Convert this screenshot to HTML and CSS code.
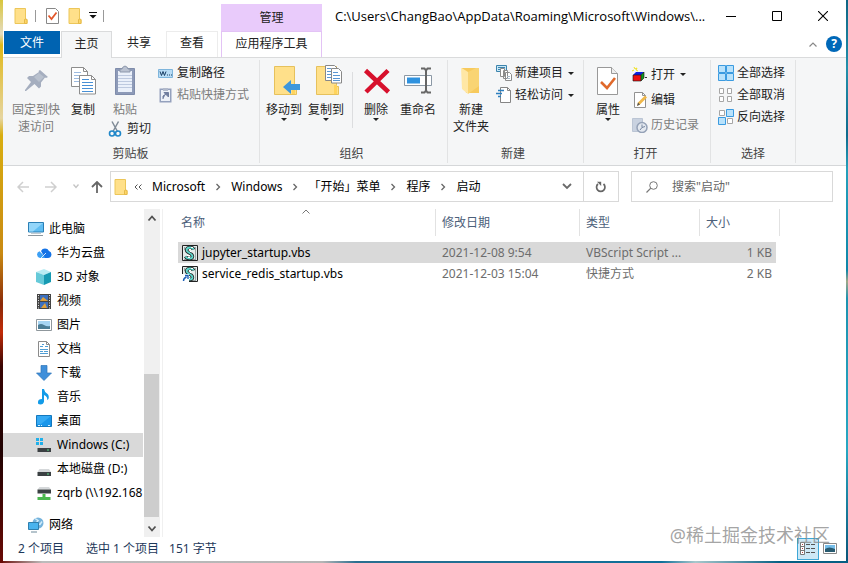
FILE: index.html
```html
<!DOCTYPE html>
<html lang="zh-CN">
<head>
<meta charset="utf-8">
<meta name="viewport" content="width=device-width, initial-scale=1">
<title>启动</title>
<link rel="stylesheet" href="styles.css">
</head>
<body>
<svg class="defs" aria-hidden="true">
  <symbol id="folder" viewBox="0 0 16 16"><path d="M2 .5h10.500v11h1.500v4H2z" fill="#ffe08a" stroke="#ecc659"/><path d="M11.500 15.500v-4q1.500-1 2.500 0v4z" fill="#ffd766" stroke="#e5b94a"/></symbol>
  <symbol id="crumb" viewBox="0 0 6 8"><path d="M1.500 1 4.500 4 1.500 7" fill="none" stroke="#666" stroke-width="1.300"/></symbol>
  <symbol id="disk" viewBox="0 0 16 16"><path d="M3.500 8h9.500l2 3H1.500z" fill="#d5d8da"/><path d="M1.500 11h13.500v4H1.500z" fill="#3b4043"/><path d="M11 12.500h2v1h-2z" fill="#5be08a"/></symbol>
  <symbol id="script" viewBox="0 0 16 16"><path d="M.5.500h15v15H.5z" fill="#e4eceb" stroke="#222"/><path d="M13.500 2v12M2.500 2v3M2 14.500h12" stroke="#9aa5a4"/><path d="M11.500 4.500q-.5-2-3.500-2T4.500 5q0 1.500 3 3t3 3.500q0 2-3 2t-4-2" fill="none" stroke="#222" stroke-width="3.400"/><path d="M11.500 4.500q-.5-2-3.500-2T4.500 5q0 1.500 3 3t3 3.500q0 2-3 2t-4-2" fill="none" stroke="#5fd8cd" stroke-width="1.800"/><path d="M7 4.500h2M7.500 6l2 1M5 10.500h3M6 12.500h2M9 2.500h2" stroke="#fff"/></symbol>
</svg>

<main class="window">
  <header class="top">
    <div class="top-left">
      <div class="quick">
        <button class="q" aria-label="文件夹"><svg width="16" height="16"><use href="#folder"/></svg></button>
        <i class="bar"></i>
        <button class="q check" aria-label="属性"><svg width="13" height="16" viewBox="0 0 13 16"><path d="M.5.500h9l3 3v12H.5z" fill="#fff" stroke="#888"/><path d="m2.500 7.500 3 3.500 5-6.500" fill="none" stroke="#e2572b" stroke-width="1.800"/></svg></button>
        <button class="q" aria-label="新建文件夹"><svg width="16" height="16"><use href="#folder"/></svg></button>
        <button class="q" aria-label="自定义快速访问工具栏"><svg width="8" height="7" viewBox="0 0 8 7"><path d="M0 0h8v1H0zM.5 3h7L4 6.500z" fill="#111"/></svg></button>
        <i class="bar"></i>
      </div>
      <nav class="tabs">
        <button class="file">文件</button>
        <button class="tab active">主页</button>
        <button class="tab share">共享</button>
        <button class="tab view">查看</button>
      </nav>
    </div>
    <div class="context">
      <span class="context-name">管理</span>
      <button class="context-tab">应用程序工具</button>
    </div>
    <div class="top-right">
      <div class="caption">
        <h1 class="path">C:\Users\ChangBao\AppData\Roaming\Microsoft\Windows\...</h1>
        <button class="ctl" aria-label="最小化"><svg width="10" height="10" viewBox="0 0 10 10"><path d="M0 5.500h10" stroke="#000"/></svg></button>
        <button class="ctl" aria-label="最大化"><svg width="10" height="10" viewBox="0 0 10 10"><path d="M.5.500h9v9h-9z" fill="none" stroke="#000"/></svg></button>
        <button class="ctl" aria-label="关闭"><svg width="10" height="10" viewBox="0 0 10 10"><path d="m0 0 10 10M10 0 0 10" stroke="#000" stroke-width="1.100"/></svg></button>
      </div>
      <div class="helpers">
        <button class="q" aria-label="折叠功能区"><svg width="8" height="5" viewBox="0 0 8 5"><path d="m.5 4.500 3.500-3.500 3.500 3.500" fill="none" stroke="#888" stroke-width="1.200"/></svg></button>
        <button class="help" aria-label="帮助">?</button>
      </div>
    </div>
  </header>

  <section class="ribbon">
    <div class="group clip">
      <div class="tools">
        <button class="big pin off"><svg width="32" height="32" viewBox="0 0 32 32"><path d="m20 5 8 7-2 1-1-.5-4 5 0 4-2 2-4.500-4.500L6 26l-1 0 0-1 6-8-4-4 2-2 4 0 6-4-.5-1z" fill="#a5aebf"/><path d="m14 12 5-4 5 4-5 5z" fill="#b9c1ce"/></svg><span>固定到快<br>速访问</span></button>
        <button class="big copy"><svg width="32" height="32" viewBox="0 0 32 32"><path d="M4.500 2.500h12l4 4v15h-16z" fill="#fff" stroke="#8d8d8d"/><path d="M16.500 2.500v4h4" fill="none" stroke="#8d8d8d"/><path d="M7 7.500h7M7 10.500h11M7 13.500h6M7 16.500h5" stroke="#9dbbe0"/><path d="M12.500 10.500h12l4 4v14.500h-16z" fill="#fff" stroke="#8d8d8d"/><path d="M24.500 10.500v4h4" fill="none" stroke="#8d8d8d"/><path d="M15 14.500h7M15 17.500h11M15 20.500h11M15 23.500h11M15 26.500h11" stroke="#478fd5"/></svg><span>复制</span></button>
        <div class="paste-col">
          <button class="big paste off"><svg width="32" height="32" viewBox="0 0 32 32"><path d="M6.500 3.500h19v26h-19z" fill="#8d9ab8" stroke="#7f8cab"/><path d="M9 6h14v21H9z" fill="#eaf0fa"/><path d="M11 4h2q0-2 3-3 3 1 3 3h2v3H11z" fill="#bac2d1" stroke="#8c97ab"/><path d="M9 10.500h14M9 13.500h14M9 16.500h14M9 19.500h14M9 22.500h14" stroke="#bdc9df"/></svg><span>粘贴</span></button>
          <button class="row cut"><svg width="16" height="16" viewBox="0 0 16 16"><path d="m4 .500 5.500 10M10.500.500 5 10.500" stroke="#7e8a96" stroke-width="1.500"/><circle cx="4" cy="12.500" r="2.500" fill="none" stroke="#2087c9" stroke-width="1.600"/><circle cx="10" cy="12.500" r="2.500" fill="none" stroke="#2087c9" stroke-width="1.600"/></svg><span>剪切</span></button>
        </div>
        <div class="list">
          <button class="row"><svg width="16" height="16" viewBox="0 0 16 16"><path d="M.5 4.500h14v8H.5z" fill="#b8dcf5" stroke="#7eb5dc"/><path d="m2 6.500 1.500 4 1.500-4 1.500 4L8 6.500M9 10h1m1 0h1m1 0h1" fill="none" stroke="#183d63"/></svg><span>复制路径</span></button>
          <button class="row off"><svg width="16" height="16" viewBox="0 0 16 16"><path d="M1.500 1.500h12v14h-12z" fill="#94a1bd"/><path d="M3 3h9v11H3z" fill="#edf1f8"/><path d="M5 1h5v3H5z" fill="#b2bacb"/><path d="M5 12V9l3-2M6 5.500h4.500V10z" fill="#6f7d9e" stroke="#6f7d9e"/></svg><span>粘贴快捷方式</span></button>
        </div>
      </div>
      <h2>剪贴板</h2>
    </div>

    <div class="group organize">
      <div class="tools">
        <button class="big"><svg width="32" height="32" viewBox="0 0 32 32"><path d="M6.500 1.500h20v20h2v8h-22z" fill="#ffe08a" stroke="#e6c15c"/><path d="M24 29V20h3v9" fill="#ffd45c"/><path d="m15 22 8-7v4h9v6h-9v4z" fill="#3d97dc"/></svg><span>移动到</span><i class="caret"></i></button>
        <button class="big"><svg width="32" height="32" viewBox="0 0 32 32"><path d="M6.500 1.500h20v20h2v8h-22z" fill="#ffe08a" stroke="#e6c15c"/><path d="M24 29V20h3v9" fill="#ffd45c"/><path d="M15.500.500h9l4 4v11h-13z" fill="#fff" stroke="#888"/><path d="M21.500 3.500h7l3 3v11.500h-10z" fill="#fff" stroke="#888"/><path d="M17 3.500h4M17 6.500h4M17 9.500h4M17 12.500h4M23 7.500h5M23 10.500h7M23 13.500h7M23 15.500h7" stroke="#5b97d3"/></svg><span>复制到</span><i class="caret"></i></button>
        <i class="rule"></i>
        <button class="big del"><svg width="32" height="32" viewBox="0 0 32 32"><path d="m5.500 5.500 23 21.500M28 5.500 6 27" stroke="#d7102c" stroke-width="4.500"/></svg><span>删除</span><i class="caret"></i></button>
        <button class="big rename"><svg width="32" height="32" viewBox="0 0 32 32"><path d="M2.500 10.500h27v10h-27z" fill="#fff" stroke="#8b98a5"/><path d="M5 12.500h13v6H5z" fill="#2f92df"/><path d="M19 3.500h3.500l1.500 2 1.500-2H29M24 5v21m-5 1.500h3.500l1.500-2 1.500 2H29" fill="none" stroke="#666" stroke-width="2"/></svg><span>重命名</span></button>
      </div>
      <h2>组织</h2>
    </div>

    <div class="group create">
      <div class="tools">
        <button class="big"><svg width="32" height="32" viewBox="0 0 32 32"><path d="M7 3h17v25H11z" fill="#f7ca5d"/><path d="M6 3q1 0 7 4v22l-6-5z" fill="#ffe7a5"/><path d="M13 7q6-3 8-4h3v18l-11 8z" fill="#f9d473"/></svg><span>新建<br>文件夹</span></button>
        <div class="list">
          <button class="row"><svg width="16" height="16" viewBox="0 0 16 16"><path d="M.5.500h10v6H.5z" fill="#c9e8f7" stroke="#3c84ad"/><path d="M2 2.500h7M2 4.500h4" stroke="#3c84ad"/><path d="M4.500 3.500h4v8h-4zM7.500 5.500h4v8h-4zM9.500 7.500h4l2 2v6h-6z" fill="#fff" stroke="#8c8c8c"/><path d="M11 11.500h3M11 13.500h3" stroke="#a9b9c9"/></svg><span>新建项目</span><i class="caret"></i></button>
          <button class="row"><svg width="16" height="16" viewBox="0 0 16 16"><path d="M4.500.500h7l3 3v12h-10z" fill="#fff" stroke="#858585"/><path d="M11.500.500v3h3" fill="none" stroke="#858585"/><path d="M2 3.500h6M0 6.500h6M2 9.500h3" stroke="#2d7fbf" stroke-width="1.500"/></svg><span>轻松访问</span><i class="caret"></i></button>
        </div>
      </div>
      <h2>新建</h2>
    </div>

    <div class="group open">
      <div class="tools">
        <button class="big props"><svg width="32" height="32" viewBox="0 0 32 32"><path d="M5.500 2.500h14l6 6v21h-20z" fill="#fff" stroke="#999"/><path d="M19.500 2.500v6h6" fill="#eee" stroke="#999"/><path d="m9 17 6 6 8-10" fill="none" stroke="#e0692b" stroke-width="2.600"/></svg><span>属性</span><i class="caret"></i></button>
        <div class="list loose">
          <button class="row"><svg width="16" height="16" viewBox="0 0 16 16"><path d="M1 8h8v6H1z" fill="#ee1010"/><path d="m1 8 3-3h8L9 8z" fill="#1020e0"/><path d="m9 8 3-3v6l-3 3z" fill="#14981e"/><path d="M1 8h8v6H1zM9 8l3-3v6l-3 3" fill="none" stroke="#111" stroke-width=".6"/><path d="m2 0 1 2 2-1-1 2 2 1M0 4l2-1" fill="none" stroke="#efe11e"/><path d="M13 10h2v1h-2z" fill="#333"/></svg><span>打开</span><i class="caret"></i></button>
          <button class="row"><svg width="16" height="16" viewBox="0 0 16 16"><path d="M2.500.500h8l3 3v12h-11z" fill="#fff" stroke="#929292"/><path d="M10.500.500v3h3" fill="none" stroke="#929292"/><path d="m5 14 1-3.500 7-7 2 2-7 7z" fill="#f0b84b"/><path d="m5 14 1-3.500 2 2z" fill="#555"/></svg><span>编辑</span></button>
          <button class="row off"><svg width="16" height="16" viewBox="0 0 16 16"><path d="M.5 1.500h10v13H.5z" fill="#c9d2e0" stroke="#bbc5d4"/><circle cx="10" cy="10.500" r="5" fill="#e4e9f0" stroke="#95a2b7" stroke-width="1.500"/><path d="M10 7.500v3l3-1M8 13l2-2.500" fill="none" stroke="#7787a0"/></svg><span>历史记录</span></button>
        </div>
      </div>
      <h2>打开</h2>
    </div>

    <div class="group select">
      <div class="tools">
        <div class="list">
          <button class="row"><svg width="16" height="16" viewBox="0 0 16 16"><path d="M.5.500h7v7h-7zM8.500.500h7v7h-7zM.5 8.500h7v7h-7zM8.500 8.500h7v7h-7z" fill="#b9e2fb" stroke="#3b9be0"/></svg><span>全部选择</span></button>
          <button class="row"><svg width="16" height="16" viewBox="0 0 16 16"><path d="M1.500 1.500h4v5h-4zM9.500 1.500h4v5h-4zM1.500 9.500h4v5h-4zM9.500 9.500h4v5h-4z" fill="#fff" stroke="#a6a6a6"/></svg><span>全部取消</span></button>
          <button class="row"><svg width="16" height="16" viewBox="0 0 16 16"><path d="M1.500 1.500h5v5h-5zM9.500 9.500h5v5h-5z" fill="#fff" stroke="#a6a6a6"/><path d="M8.500.500h7v7h-7zM.5 8.500h7v7h-7z" fill="#b9e2fb" stroke="#3b9be0"/></svg><span>反向选择</span></button>
        </div>
      </div>
      <h2>选择</h2>
    </div>
  </section>

  <section class="nav">
    <div class="arrows">
      <button class="q" aria-label="后退"><svg width="12" height="12" viewBox="0 0 12 12"><path d="M12 6H1m5-5L1 6l5 5" fill="none" stroke="#cfcfcf" stroke-width="1.500"/></svg></button>
      <button class="q" aria-label="前进"><svg width="12" height="12" viewBox="0 0 12 12"><path d="M0 6h11M6 1l5 5-5 5" fill="none" stroke="#cfcfcf" stroke-width="1.500"/></svg></button>
      <button class="q recent" aria-label="最近位置"><svg width="6" height="5" viewBox="0 0 6 5"><path d="m.5.500 2.500 3 2.500-3" fill="none" stroke="#c4c4c4" stroke-width="1.300"/></svg></button>
      <button class="q" aria-label="上移"><svg width="12" height="12" viewBox="0 0 12 12"><path d="M6 12V1M1 6l5-5 5 5" fill="none" stroke="#666" stroke-width="1.800"/></svg></button>
    </div>
    <div class="address">
      <div class="crumbs">
        <svg class="crumb-icon" width="16" height="16"><use href="#folder"/></svg>
        <svg class="back" width="8" height="6" viewBox="0 0 8 6"><path d="M3.500.500 1 3l2.500 2.500m4-5L5 3l2.500 2.500" fill="none" stroke="#555"/></svg>
        <a href="#">Microsoft</a><svg width="6" height="8"><use href="#crumb"/></svg>
        <a href="#">Windows</a><svg width="6" height="8"><use href="#crumb"/></svg>
        <a href="#">「开始」菜单</a><svg width="6" height="8"><use href="#crumb"/></svg>
        <a href="#">程序</a><svg width="6" height="8"><use href="#crumb"/></svg>
        <a href="#">启动</a>
        <button class="q drop" aria-label="以前的位置"><svg width="10" height="7" viewBox="0 0 10 7"><path d="m1 1 4 4 4-4" fill="none" stroke="#6a6a6a" stroke-width="1.800"/></svg></button>
      </div>
      <button class="q refresh" aria-label="刷新"><svg width="12" height="12" viewBox="0 0 12 12"><path d="M3 3a4.200 4.200 0 1 0 5.500 0" fill="none" stroke="#666" stroke-width="1.700"/><path d="M2 .8h4.200V5z" fill="#666"/></svg></button>
    </div>
    <label class="search"><svg width="12" height="12" viewBox="0 0 12 12"><circle cx="7.500" cy="4.500" r="3.800" fill="none" stroke="#777"/><path d="M4.800 7.200.5 11.500" stroke="#777" stroke-width="1.200"/></svg><input type="search" aria-label="搜索" placeholder='搜索"启动"'></label>
  </section>

  <section class="content">
    <aside class="side">
      <ul class="tree">
        <li class="root"><svg width="16" height="16" viewBox="0 0 16 16"><path d="M.5 1.500h15v9.500H.5z" fill="#5fbdf2" stroke="#2b7fb5"/><path d="M1 2h14L5 10.500H1z" fill="#93d6fa"/><path d="M0 14.500h15" stroke="#8c979e"/><path d="M3 12.500h10" stroke="#c2cbd1"/></svg><span>此电脑</span></li>
        <li><svg width="16" height="16" viewBox="0 0 16 16"><path d="M4 13a3.500 3.500 0 0 1-.5-6.800L10 13z" fill="#3ca0f5"/><path d="M5 6a4.500 4.500 0 0 1 8 0 3.600 3.600 0 0 1-1 7H9z" fill="#1473e6"/><path d="m5 13 5-5" stroke="#fff" stroke-width=".8"/></svg><span>华为云盘</span></li>
        <li><svg width="16" height="16" viewBox="0 0 16 16"><path d="m8 0 7 3-7 3-8-3z" fill="#b9ecf3"/><path d="m0 3 8 3v10l-8-3z" fill="#66cad9"/><path d="m8 6 7-3v10l-7 3z" fill="#169ab2"/></svg><span>3D 对象</span></li>
        <li><svg width="16" height="16" viewBox="0 0 16 16"><path d="M1 1h14v15H1z" fill="#444"/><path d="M4 2h8v6H4zM4 9h8v6H4z" fill="#3c6fbd"/><path d="m4 8 3-4 5 4zM5 15l4-5 2 5z" fill="#e0a13b"/><path d="M2.500 2v14M13.500 2v14" stroke="#e6e6e6" stroke-dasharray="1 1.500"/></svg><span>视频</span></li>
        <li><svg width="16" height="16" viewBox="0 0 16 16"><path d="M.5 2.500h15v11H.5z" fill="#fff" stroke="#8f979c"/><path d="M2 4h12v8H2z" fill="#a7d5f3"/><path d="M2 8q3-2 6 0t6 1v3H2z" fill="#4b7d96"/></svg><span>图片</span></li>
        <li><svg width="16" height="16" viewBox="0 0 16 16"><path d="M2.500.500h8l3 3v12h-11z" fill="#fff" stroke="#8b8b8b"/><path d="M10.500.500v3h3" fill="none" stroke="#8b8b8b"/><path d="M4 5.500h3m2 0h3M4 8.500h8M4 10.500h3m1 0h4M4 12.500h8M6 3.500h2" stroke="#4f9ed5"/></svg><span>文档</span></li>
        <li><svg width="16" height="16" viewBox="0 0 16 16"><path d="M5 .500h6V8h4.500L8 15.500.500 8H5z" fill="#3f8fda" stroke="#2c74b8" stroke-width=".7"/></svg><span>下载</span></li>
        <li><svg width="16" height="16" viewBox="0 0 16 16"><path d="M6 0h2q.5 3 3 4.500T12.500 10L11 11q1-3-3-5v6.500q-.5 3-3.500 3T2 13q0-3 4-3z" fill="#129be8"/></svg><span>音乐</span></li>
        <li><svg width="16" height="16" viewBox="0 0 16 16"><path d="M.5 2.500h15v11H.5z" fill="#1996ea" stroke="#1478bd"/><path d="M1 3h14L5 11H1z" fill="#35aaf4"/><path d="M2 12.500h2m1 0h1m6 0h2" stroke="#d9f1ff"/></svg><span>桌面</span></li>
        <li class="current"><svg width="16" height="16" viewBox="0 0 16 16"><path d="M0 1h3v3H0zm4 0h3v3H4zM0 5h3v3H0zm4 0h3v3H4z" fill="#1fb0ea"/><use href="#disk"/></svg><span>Windows (C:)</span></li>
        <li><svg width="16" height="16"><use href="#disk"/></svg><span>本地磁盘 (D:)</span></li>
        <li><svg width="16" height="16" viewBox="0 0 16 16"><path d="M3.500 2h9.500l2 2.500H1.500z" fill="#d5d8da"/><path d="M1.500 4.500h13.500v4H1.500z" fill="#3b4043"/><path d="M6.500 9h3v3h5v3h-13v-3h5z" fill="#4cb84f"/></svg><span>zqrb (\\192.168</span></li>
        <li class="root network"><svg width="16" height="16" viewBox="0 0 16 16"><circle cx="10" cy="6" r="5.500" fill="#75b3dc"/><path d="m7 1.500 3 2-2 3 4 1 2-3" fill="none" stroke="#d2ecfa" stroke-width="1.500"/><path d="M.5 5.500h10v7H.5z" fill="#49b3ee" stroke="#2f7fae"/><path d="M3 15h6" stroke="#6d8999"/></svg><span>网络</span></li>
      </ul>
      <div class="scroll">
        <svg class="arrow" width="10" height="7" viewBox="0 0 10 7"><path d="m1.500 5.500 3.500-4 3.500 4" fill="none" stroke="#505050" stroke-width="1.800"/></svg>
        <div class="track"><div class="thumb"></div></div>
        <svg class="arrow" width="10" height="7" viewBox="0 0 10 7"><path d="m1.500 1.500 3.500 4 3.500-4" fill="none" stroke="#505050" stroke-width="1.800"/></svg>
      </div>
    </aside>
    <div class="files">
      <table>
        <colgroup><col class="c-name"><col class="c-date"><col class="c-type"><col class="c-size"></colgroup>
        <thead><tr><th class="sorted">名称<svg width="8" height="5" viewBox="0 0 8 5"><path d="m.5 4.500 3.500-3.500 3.500 3.500" fill="none" stroke="#777"/></svg></th><th>修改日期</th><th>类型</th><th>大小</th></tr></thead>
        <tbody>
          <tr class="picked"><td><div class="name"><svg width="16" height="16"><use href="#script"/></svg><span>jupyter_startup.vbs</span></div></td><td>2021-12-08 9:54</td><td>VBScript Script ...</td><td>1 KB</td></tr>
          <tr><td><div class="name"><svg width="16" height="16" viewBox="0 0 16 16"><use href="#script"/><path d="M0 8h7v8H0z" fill="#fff"/><path d="M1.500 15q0-3 3-4M3 9.500h3V13" fill="none" stroke="#1d5fb8" stroke-width="1.400"/></svg><span>service_redis_startup.vbs</span></div></td><td>2021-12-03 15:04</td><td>快捷方式</td><td>2 KB</td></tr>
        </tbody>
      </table>
    </div>
  </section>

  <footer class="status">
    <span class="count">2 个项目</span><span class="sel">选中 1 个项目</span><span>151 字节</span>
    <div class="views">
      <button class="details" aria-label="详细信息"><svg width="16" height="16" viewBox="0 0 16 16"><path d="M.5 1.500h4v12h-4zM.5 5.500h4m-4 4h4" fill="#fff" stroke="#777"/><path d="M2 3.500h1m-1 4h1m-1 4h1" stroke="#b04444"/><path d="M6 3.500h4m1 0h4M6 7.500h4m1 0h4M6 11.500h4m1 0h4" stroke="#555"/></svg></button>
      <button class="q" aria-label="大图标"><svg width="14" height="12" viewBox="0 0 14 12"><path d="M.5.500h13v10H.5z" fill="#fff" stroke="#888"/><path d="M2 2h10v7H2z" fill="#75bde9"/><path d="M2 6q4-3 10 0v3H2z" fill="#285a70"/></svg></button>
    </div>
  </footer>
  <p class="mark">@稀土掘金技术社区</p>
</main>
</body>
</html>
```
FILE: styles.css
```css
* {
  box-sizing: border-box;
}

body {
  display: flex;
  min-height: 100vh;
  margin: 0;
  padding: 0 2px 2px 3px;
  background:
    linear-gradient(#d9c63c, #e5dcc0 6%, #e0b818 8%, #e6d5a0 21%, #d9ae10 24%, #c98a12 45%, #8a2a08 54%, #c22b08 59%, #3a0503 65%, #200202 80%, #6a0a05) left / 3px 100% no-repeat,
    linear-gradient(90deg, #6a0a05, #bcbcbc 5%, #b5b5b5 38%, #2a6f90 42%, #0e6f99 78%, #a9c8cc 82%, #055f83 92%) bottom / 100% 2px no-repeat,
    linear-gradient(#0e6483, #2390ab 12%, #0f6a8c 24%, #25a0bb 30%, #0e86a8 48%, #9fa888 50%, #1d93b0 53%, #27a7c2 80%, #0a5377) right / 2px 100% no-repeat;
  font: 12px/16px "Noto Sans", "Noto Sans CJK SC", sans-serif;
  color: #222;
}

button {
  padding: 0;
  border: 0;
  background: none;
  font: inherit;
  color: inherit;
}

svg {
  flex: none;
  display: block;
}

.defs {
  position: absolute;
  width: 0;
  height: 0;
}

.window {
  position: relative;
  display: flex;
  flex: 1;
  flex-direction: column;
  min-width: 0;
  background: #fff;
}

/* Title bar and tabs */
.top {
  display: flex;
  height: 57px;
}

.top-left {
  width: 218px;
}

.quick {
  display: flex;
  align-items: center;
  height: 31px;
  padding-left: 10px;
  gap: 6px;
}

.q {
  display: grid;
  place-items: center;
}

.bar {
  width: 1px;
  height: 12px;
  margin: 0 4px 0 0;
  background: #999;
}

.check {
  margin-right: 2px;
}

.tabs {
  display: flex;
  height: 27px;
  padding-left: 1px;
}

.tabs button {
  position: relative;
  height: 27px;
  padding-bottom: 3px;
}

.tabs .file {
  width: 56px;
  height: 23px;
  margin-right: 1px;
  padding: 0;
  background: #0063b1;
  color: #fff;
}

.tabs .active {
  width: 51px;
  background: #f5f6f7;
  border: 1px solid #dadbdc;
  border-bottom: 0;
}

.share {
  width: 54px;
}

.tabs .view {
  width: 52px;
  height: 26px;
  border: 1px solid #ececec;
  border-bottom: 0;
}

.context {
  display: flex;
  flex-direction: column;
  width: 101px;
  padding-top: 4px;
  text-align: center;
}

.context-name {
  height: 27px;
  line-height: 27px;
  background: #e9cbfb;
}

.context-tab {
  flex: 1;
  padding-bottom: 2px;
  border: 1px solid #e3c3f5;
  border-bottom: 0;
  background: #fff;
  white-space: nowrap;
}

.top-right {
  flex: 1;
  min-width: 0;
}

.caption {
  display: flex;
  align-items: center;
  height: 31px;
}

.path {
  flex: 1;
  margin: 0;
  padding-left: 13px;
  overflow: hidden;
  font-family: "Open Sans", sans-serif;
  font-size: 13px;
  font-weight: 400;
  white-space: nowrap;
  color: #000;
}

.ctl {
  display: grid;
  place-items: center;
  width: 46px;
  height: 31px;
}

.helpers {
  display: flex;
  justify-content: flex-end;
  align-items: center;
  gap: 9px;
  height: 26px;
  padding-right: 4px;
}

.help {
  width: 16px;
  height: 16px;
  border-radius: 50%;
  background: #0068b8;
  color: #fff;
  font-weight: 700;
}

/* Ribbon */
.ribbon {
  display: flex;
  height: 109px;
  padding: 2px 0;
  border-top: 1px solid #dadbdc;
  border-bottom: 1px solid #d5d7d9;
  background: #f5f6f7;
}

.group {
  display: flex;
  flex-direction: column;
  flex: none;
  border-right: 1px solid #e2e3e4;
}

.clip { width: 257px; padding-left: 6px; }
.organize { width: 188px; padding-left: 3px; }
.create { width: 136px; padding-left: 2px; }
.open { width: 127px; padding-left: 4px; }
.select { width: 85px; padding-left: 7px; }

.tools {
  display: flex;
  flex: 1;
}

.group h2 {
  margin: 0;
  padding: 0 7px 1px 0;
  font-size: 12px;
  font-weight: 400;
  text-align: center;
  color: #444;
}

.big {
  display: flex;
  flex-direction: column;
  align-items: center;
  align-self: flex-start;
  width: 42px;
  padding-top: 5px;
  line-height: 17px;
  white-space: nowrap;
}

.big svg {
  margin-bottom: 4px;
}

.pin { width: 54px; }
.copy, .paste, .props { width: 40px; }
.del { width: 36px; }
.rename { width: 48px; }

.off {
  color: #7c7c7c;
}

.caret {
  border: 3px solid transparent;
  border-top-color: #222;
  border-bottom: 0;
}

.rule {
  width: 1px;
  height: 56px;
  margin: 12px 5px 0;
  background: #dcdddf;
}

.row {
  display: flex;
  align-items: center;
  gap: 3px;
  height: 22px;
  white-space: nowrap;
}

.row .caret {
  margin-left: 2px;
}

.paste-col {
  width: 55px;
  padding-left: 2px;
}

.cut {
  padding-left: 3px;
}

.list {
  padding-top: 2px;
}

.create .list,
.open .list {
  padding-left: 4px;
}

.loose .row {
  height: 25px;
}

/* Address bar */
.nav {
  display: flex;
  height: 43px;
  padding: 5px 13px 7px 0;
}

.arrows {
  display: flex;
  align-items: center;
  width: 107px;
  padding-left: 14px;
  gap: 16px;
}

.recent {
  margin-right: -4px;
}

.address {
  display: flex;
  flex: 1;
  min-width: 0;
  border: 1px solid #d9d9d9;
}

.crumbs {
  display: flex;
  flex: 1;
  align-items: center;
  gap: 10px;
  padding-left: 2px;
  white-space: nowrap;
}

.crumb-icon {
  margin-right: -5px;
}

.crumbs a {
  color: #000;
  text-decoration: none;
}

.drop {
  margin: 0 11px 0 auto;
}

.refresh {
  width: 35px;
  border-left: 1px solid #d9d9d9;
}

.search {
  display: flex;
  flex: none;
  align-items: center;
  gap: 14px;
  width: 202px;
  margin-left: 12px;
  padding-left: 14px;
  border: 1px solid #d9d9d9;
}

.search input {
  flex: 1;
  min-width: 0;
  padding: 0;
  border: 0;
  outline: 0;
  background: none;
  font: inherit;
}

.search input::placeholder {
  color: #666;
}

/* Folder tree and file list */
.content {
  display: flex;
  flex: 1;
}

.side {
  display: flex;
  width: 160px;
  border-right: 1px solid #f0f0f0;
}

.tree {
  flex: 1;
  min-width: 0;
  margin: 0;
  padding: 8px 0 0;
  overflow: hidden;
  list-style: none;
  color: #000;
}

.tree li {
  display: flex;
  align-items: center;
  gap: 5px;
  height: 24px;
  margin-right: 1px;
  padding-left: 33px;
  overflow: hidden;
  white-space: nowrap;
}

.tree .root {
  padding-left: 25px;
}

.tree .current {
  background: #d9d9d9;
}

.tree .network {
  margin-top: 8px;
}

.scroll {
  display: flex;
  flex-direction: column;
  align-items: center;
  width: 16px;
  margin-right: 2px;
  padding: 6px 0 5px;
  background: #f0f0f0;
}

.track {
  display: flex;
  flex: 1;
  align-items: flex-end;
  width: 100%;
  margin: 4px 0 8px;
  padding-right: 1px;
}

.thumb {
  width: 100%;
  height: 49%;
  background: #cdcdcd;
}

.files {
  flex: 1;
  min-width: 0;
  padding-left: 15px;
}

table {
  width: 602px;
  max-width: 100%;
  border-collapse: collapse;
  table-layout: fixed;
}

.c-name { width: 258px; }
.c-date { width: 144px; }
.c-type { width: 120px; }
.c-size { width: 80px; }

th {
  position: relative;
  height: 33px;
  padding: 0 0 5px 6px;
  background: linear-gradient(#e2e2e2, #e2e2e2) right top / 1px 27px no-repeat;
  font-weight: 400;
  text-align: left;
  color: #4c607a;
}

.sorted {
  padding-left: 3px;
}

.sorted svg {
  position: absolute;
  top: 0;
  left: 48%;
}

td {
  height: 21px;
  padding: 0 0 0 6px;
  white-space: nowrap;
  color: #6d6d6d;
}

td:first-child {
  padding-left: 4px;
  color: #000;
}

td:last-child {
  padding-right: 8px;
  text-align: right;
}

.name {
  display: flex;
  align-items: center;
  gap: 4px;
}

.picked {
  background: linear-gradient(#d9d9d9, #d9d9d9) left / calc(100% - 4px) 100% no-repeat;
}

/* Status bar */
.status {
  display: flex;
  align-items: center;
  height: 24px;
  padding: 0 9px 0 15px;
  color: #1e395b;
}

.count {
  margin-right: 22px;
}

.sel {
  margin-right: 10px;
}

.views {
  display: flex;
  gap: 4px;
  margin-left: auto;
}

.details {
  display: grid;
  place-items: center;
  width: 22px;
  height: 22px;
  border: 1px solid #3fa7d6;
  background: #cce8f6;
}

.mark {
  position: absolute;
  right: 16px;
  bottom: 14px;
  margin: 0;
  font-size: 18px;
  line-height: 24px;
  color: #8c8c8ccc;
  pointer-events: none;
}
```
